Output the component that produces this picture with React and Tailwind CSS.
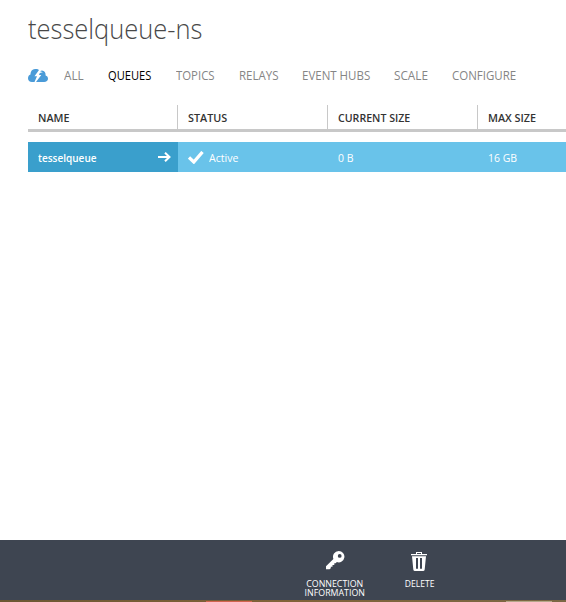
const TABS = [
  { label: "ALL", cell: "w-[43.5px]", text: "scale-x-[0.94]" },
  { label: "QUEUES", cell: "w-[68px]", text: "scale-x-[0.89]", active: true },
  { label: "TOPICS", cell: "w-[63px]", text: "scale-x-[0.91]" },
  { label: "RELAYS", cell: "w-[63.5px]", text: "scale-x-[0.92]" },
  { label: "EVENT HUBS", cell: "w-[92px]", text: "scale-x-[0.92]" },
  { label: "SCALE", cell: "w-[57.5px]", text: "scale-x-[0.94]" },
  { label: "CONFIGURE", cell: "w-[76px]", text: "scale-x-[0.92]" },
];

const COLUMNS = [
  { label: "NAME", cell: "w-[150px] border-r", text: "scale-x-[0.98]" },
  { label: "STATUS", cell: "w-[150px] border-r", text: "scale-x-[0.98]" },
  { label: "CURRENT SIZE", cell: "w-[150px] border-r", text: "scale-x-[0.965]" },
  { label: "MAX SIZE", cell: "w-[88px]", text: "scale-x-[0.98]" },
];

function CloudIcon() {
  return (
    <svg className="mb-[2px] h-[13px] w-5" viewBox="0 0 20 13" fill="#4a9bd8">
      <path d="M7 0C9 -.3 10.200 .2 11 1L6.500 7.200H9L6.500 13H4C1.500 13 0 11.500 0 9.300C0 7.300 1 6 2.500 5.500C2.300 2.500 4 .4 7 0Z" />
      <path d="M11.800 4L11 6H13.300L8 13H16C18.500 13 20 11.500 20 9.700C20 8 19 6.800 17.600 6.500C17.800 3.600 16.500 1.700 14 1.500C13.200 1.500 12.600 1.700 12 2.200C13.200 2.300 14 2.700 14.700 3.700C13.800 3.300 12.800 3.400 11.800 4Z" />
    </svg>
  );
}

function KeyIcon() {
  return (
    <svg className="h-[19px] w-[19px]" viewBox="0 0 19 19" fill="#fff">
      <path fillRule="evenodd" d="M12.700 0A5.700 5.700 0 1 1 10.900 11.100L9.600 12.300H8.300V14H6.500V15.700H4.800V17.300L3.500 18.300H0V15.300L7.400 7.900A5.800 5.800 0 0 1 12.700 0ZM13.700 3A1.900 1.900 0 1 0 13.700 6.800A1.900 1.900 0 1 0 13.700 3Z" />
    </svg>
  );
}

function TrashIcon() {
  return (
    <svg className="h-[19px] w-4" viewBox="0 0 16 19" fill="#fff">
      <path fillRule="evenodd" d="M5 0H11V2H16V3.200H0V2H5ZM6 1V2H10V1ZM1 4.200H15L13.700 17.500Q13.500 19 12 19H4Q2.500 19 2.300 17.500ZM5 6V16.800H7V6ZM9 6V16.800H11V6Z" />
    </svg>
  );
}

export default function App() {
  return (
    <div className="flex h-[602px] w-[566px] flex-col overflow-hidden bg-white font-['Open_Sans','Noto_Sans',sans-serif] whitespace-nowrap">
      <h1 className="mt-[7px] ml-[28px] h-[42px] w-[174px] text-[28px] leading-[42px] font-light text-[#484848]">
        <span className="inline-block origin-left scale-x-[0.91]">tesselqueue-ns</span>
      </h1>

      <nav className="mt-[17px] flex h-[20px] items-center pl-[28px] text-[12.5px] leading-[20px] text-[#858585]">
        <div className="w-[36px]">
          <CloudIcon />
        </div>
        {TABS.map((tab) => (
          <a key={tab.label} className={`${tab.cell} ${tab.active ? "text-black" : ""}`}>
            <span className={`inline-block origin-left ${tab.text}`}>{tab.label}</span>
          </a>
        ))}
      </nav>

      <div className="mt-[19px] ml-[28px] flex h-[27px] w-[538px] border-b-3 border-[#c8c8c8] text-[11px] leading-[26px] font-semibold text-[#333]">
        {COLUMNS.map((column) => (
          <div key={column.label} className={`${column.cell} h-6 border-[#c8c8c8] pl-[9.500px]`}>
            <span className={`inline-block origin-left ${column.text}`}>{column.label}</span>
          </div>
        ))}
      </div>

      <div className="mt-[10px] ml-[28px] flex h-[30px] w-[538px] bg-[#69c3ea] text-[11px] leading-[32px] text-white">
        <div className="flex w-[150px] justify-between bg-[#3a9fcc] pr-[7px] pl-[9.500px] font-semibold">
          <span className="inline-block w-[60px]">
            <span className="inline-block origin-left scale-x-[0.91]">tesselqueue</span>
          </span>
          <svg className="mt-[10px] h-[10px] w-[13px]" viewBox="0 0 13 10" fill="none" stroke="#fff" strokeWidth="2">
            <path d="M0 5H11.500M7 .7L11.500 5L7 9.300" />
          </svg>
        </div>
        <div className="flex w-[150px] pl-[10px]">
          <svg className="mt-[9px] h-[13px] w-4" viewBox="0 0 16 13" fill="none" stroke="#fff" strokeWidth="3.300">
            <path d="M1 6.500L5.800 11L14.500 1" />
          </svg>
          <span className="ml-[5px] inline-block origin-left scale-x-[0.96]">Active</span>
        </div>
        <div className="w-[150px] pl-[9.500px]">
          <span className="inline-block origin-left scale-x-[0.95]">0 B</span>
        </div>
        <div className="w-[88px] pl-[9.500px]">
          <span className="inline-block origin-left scale-x-[0.95]">16 GB</span>
        </div>
      </div>

      <footer className="mt-auto h-[62px] bg-[#3e4551]">
        <div className="flex h-[60px] pl-[295px] text-center text-[9px] leading-[9px] text-white">
          <div className="flex w-[80px] flex-col items-center pt-[11px]">
            <KeyIcon />
            <span className="mt-[9px] inline-block scale-x-[0.98]">
              CONNECTION
              <br />
              INFORMATION
            </span>
          </div>
          <div className="ml-[5px] flex w-[80px] flex-col items-center pt-[12px]">
            <div className="mr-[2px]">
              <TrashIcon />
            </div>
            <span className="mt-[8px] inline-block scale-x-[0.95]">DELETE</span>
          </div>
        </div>
        <div className="flex h-[2px] bg-linear-to-r from-[#6b5733] via-[#806238] to-[#7b6845]">
          <div className="mt-px ml-[206px] h-px w-[46px] bg-[#d36550]" />
          <div className="mt-px ml-[254px] h-px w-[46px] bg-[#b5a78a]" />
        </div>
      </footer>
    </div>
  );
}
